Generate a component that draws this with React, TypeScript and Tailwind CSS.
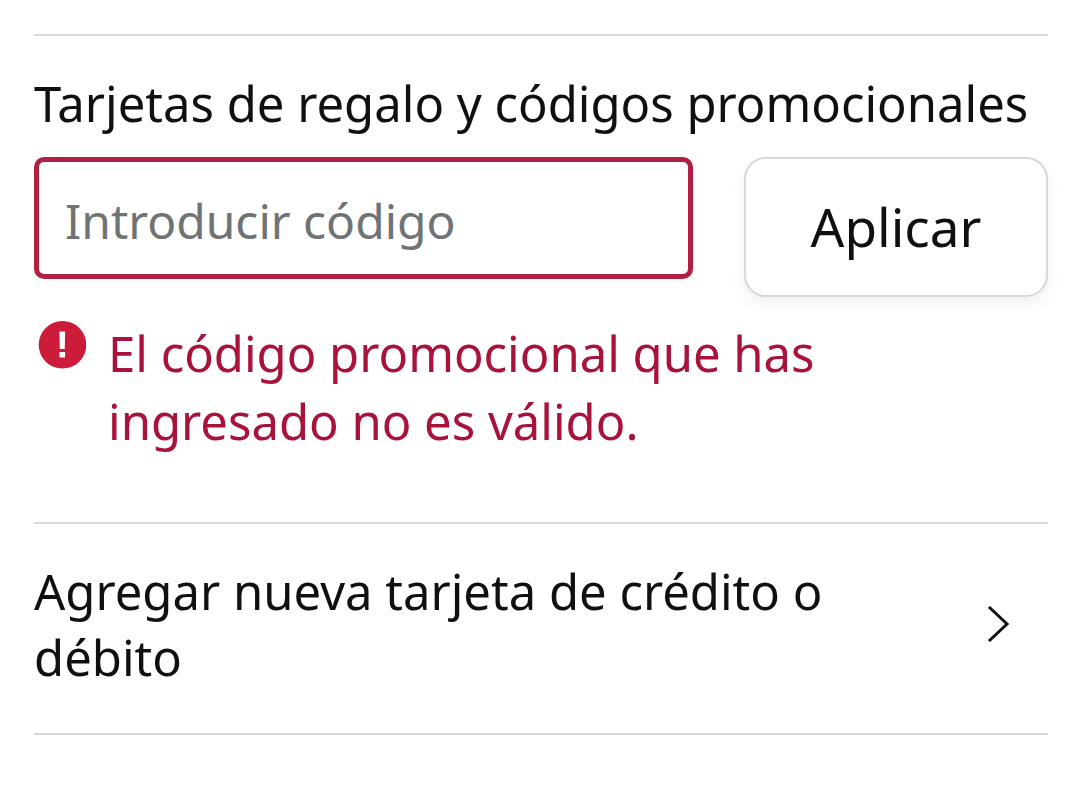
export default function App() {
  return (
    <main className="min-h-screen bg-white pt-[34px] pr-8 pl-[34px] font-['Noto_Sans',sans-serif] text-[49px] leading-[66px] text-[#0f1111]">
      <section className="border-t-2 border-[#d5d9d9] pt-[34px] pb-[67px]">
        <label htmlFor="code" className="block whitespace-nowrap">
          Tarjetas de regalo y códigos promocionales
        </label>
        <form className="mt-[21px] flex items-start gap-[51px]" onSubmit={(e) => e.preventDefault()}>
          <input
            id="code"
            type="text"
            placeholder="Introducir código"
            aria-invalid="true"
            aria-describedby="code-error"
            className="h-[122px] min-w-0 flex-1 rounded-[10px] border-[5px] border-[#b12042] bg-white px-[26px] pt-1 text-[48px] outline-none placeholder:text-[#6f7373] placeholder:opacity-100"
          />
          <button
            type="submit"
            className="h-[140px] w-[304px] shrink-0 rounded-[22px] border-2 border-[#d5d9d9] bg-white text-[53px] shadow-[0_6px_14px_rgba(213,217,217,0.4)]"
          >
            Aplicar
          </button>
        </form>
        <div id="code-error" role="alert" className="mt-[22px] flex gap-[22px] leading-[68px] text-[#a8123b]">
          <svg viewBox="0 0 48 48" className="mt-[2px] ml-1 size-12 shrink-0" aria-hidden="true">
            <circle cx="24.5" cy="23.8" r="23.8" fill="#cc1c39" />
            <path d="M21.5 10.5h5.6l-.3 17.5h-5zM21.5 31h5.6v5.5h-5.6z" fill="#fff" />
          </svg>
          <p className="max-w-[800px]">El código promocional que has ingresado no es válido.</p>
        </div>
      </section>
      <a
        href="#card"
        className="flex items-center justify-between border-y-2 border-[#d5d9d9] pt-[34px] pb-[43px]"
      >
        <span className="max-w-[840px]">Agregar nueva tarjeta de crédito o débito</span>
        <svg viewBox="0 0 24 40" className="mr-[38px] h-10 w-6" fill="none" stroke="#0f1111" strokeWidth="3" aria-hidden="true">
          <path d="M3 3l18 17L3 37" />
        </svg>
      </a>
    </main>
  );
}
